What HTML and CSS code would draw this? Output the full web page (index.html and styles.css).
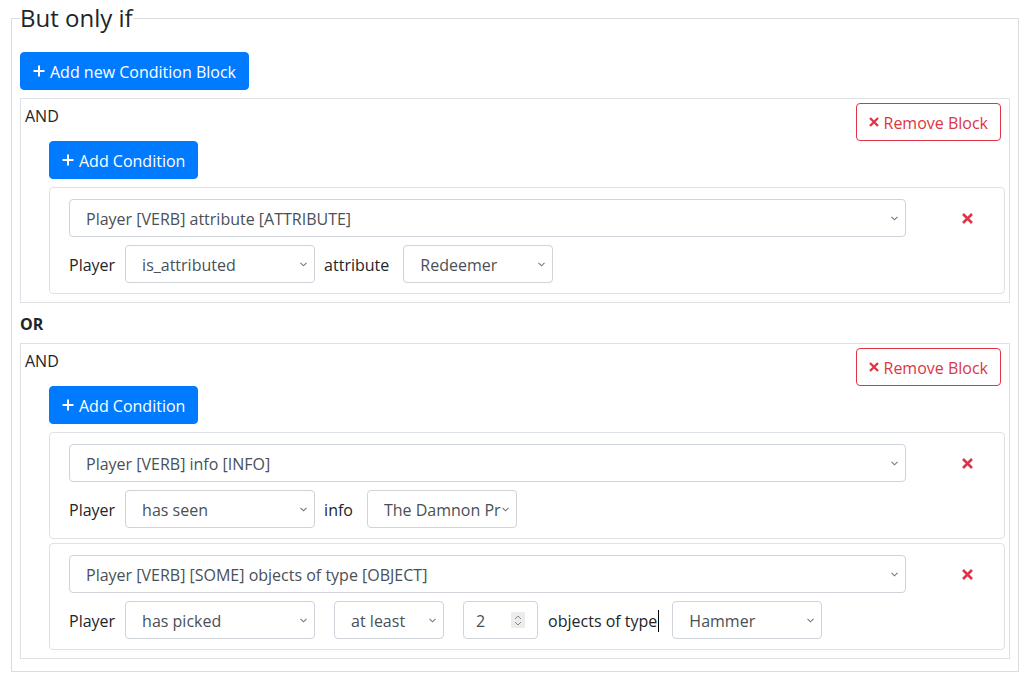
FILE: index.html
```html
<!DOCTYPE html>
<html lang="en">

<head>
    <meta charset="UTF-8">
    <meta name="viewport" content="width=device-width, initial-scale=1.0">
    <title>Conditions</title>
    <link rel="stylesheet" href="styles.css">
</head>

<body>
    <fieldset class="conditions">
        <legend>But only if</legend>

        <button class="btn btn-primary add-block">
            <svg class="icon" width="12" height="12" viewBox="0 0 12 12"><path d="M6 0.5v11M0.5 6h11" /></svg>
            Add new Condition Block
        </button>

        <div class="block">
            <div class="block-head">
                <span class="block-op">AND</span>
                <button class="btn btn-outline-danger">
                    <svg class="icon" width="10" height="10" viewBox="0 0 10 10"><path d="M1 1l8 8M9 1l-8 8" /></svg>
                    Remove Block
                </button>
            </div>
            <button class="btn btn-primary add-cond">
                <svg class="icon" width="12" height="12" viewBox="0 0 12 12"><path d="M6 0.5v11M0.5 6h11" /></svg>
                Add Condition
            </button>

            <div class="cond">
                <div class="cond-row">
                    <select class="form-control type-select">
                        <option>Player [VERB] attribute [ATTRIBUTE]</option>
                    </select>
                    <button class="cond-remove">
                        <svg width="11" height="11" viewBox="0 0 11 11"><path d="M1 1l9 9M10 1l-9 9" /></svg>
                    </button>
                </div>
                <div class="cond-row">
                    <span class="label">Player</span>
                    <select class="form-control w190">
                        <option>is_attributed</option>
                    </select>
                    <span class="label">attribute</span>
                    <select class="form-control w150">
                        <option>Redeemer</option>
                    </select>
                </div>
            </div>
        </div>

        <div class="or">OR</div>

        <div class="block">
            <div class="block-head">
                <span class="block-op">AND</span>
                <button class="btn btn-outline-danger">
                    <svg class="icon" width="10" height="10" viewBox="0 0 10 10"><path d="M1 1l8 8M9 1l-8 8" /></svg>
                    Remove Block
                </button>
            </div>
            <button class="btn btn-primary add-cond">
                <svg class="icon" width="12" height="12" viewBox="0 0 12 12"><path d="M6 0.5v11M0.5 6h11" /></svg>
                Add Condition
            </button>

            <div class="cond">
                <div class="cond-row">
                    <select class="form-control type-select">
                        <option>Player [VERB] info [INFO]</option>
                    </select>
                    <button class="cond-remove">
                        <svg width="11" height="11" viewBox="0 0 11 11"><path d="M1 1l9 9M10 1l-9 9" /></svg>
                    </button>
                </div>
                <div class="cond-row">
                    <span class="label">Player</span>
                    <select class="form-control w190">
                        <option>has seen</option>
                    </select>
                    <span class="label">info</span>
                    <select class="form-control w150">
                        <option>The Damnon Prophecy</option>
                    </select>
                </div>
            </div>

            <div class="cond">
                <div class="cond-row">
                    <select class="form-control type-select">
                        <option>Player [VERB] [SOME] objects of type [OBJECT]</option>
                    </select>
                    <button class="cond-remove">
                        <svg width="11" height="11" viewBox="0 0 11 11"><path d="M1 1l9 9M10 1l-9 9" /></svg>
                    </button>
                </div>
                <div class="cond-row">
                    <span class="label">Player</span>
                    <select class="form-control w190 wide-gap">
                        <option>has picked</option>
                    </select>
                    <select class="form-control w110 wide-gap">
                        <option>at least</option>
                    </select>
                    <div class="form-control number-field">
                        <span>2</span>
                        <span class="spinner">
                            <svg width="10" height="13" viewBox="0 0 10 13"><path d="M2 5l3-3 3 3M2 8l3 3 3-3" /></svg>
                        </span>
                    </div>
                    <span class="label">objects of type<span class="caret"></span></span>
                    <select class="form-control w150">
                        <option>Hammer</option>
                    </select>
                </div>
            </div>
        </div>
    </fieldset>
</body>

</html>
```

FILE: styles.css
```css
body {
    margin: 0;
    font-family: 'Open Sans', 'Noto Sans', sans-serif;
    font-size: 16px;
    line-height: 24px;
    color: #212529;
    background: #fff;
}

.conditions {
    margin: 0 12px 0 11px;
    padding: 16px 8px 12px;
    border: 1px solid #dcdcdc;
    min-width: 0;
}

.conditions legend {
    padding: 0;
    font-size: 24px;
    line-height: 36px;
}

.btn {
    display: flex;
    align-items: center;
    gap: 5px;
    width: max-content;
    padding: 7px 12px 5px;
    border: 1px solid transparent;
    border-radius: 4px;
    font-family: inherit;
    font-size: 16px;
    line-height: 24px;
    cursor: pointer;
}

.btn .icon {
    margin-top: -2px;
}

.btn .icon path {
    fill: none;
    stroke: currentColor;
    stroke-width: 2;
}

.btn-primary {
    background: #007bff;
    border-color: #007bff;
    color: #fff;
}

.btn-outline-danger {
    background: #fff;
    border-color: #dc3545;
    color: #dc3545;
}

.btn-outline-danger .icon path {
    stroke-width: 2.3;
}

.add-block {
    margin-bottom: 8px;
}

.block {
    border: 1px solid #dee2e6;
    padding: 4px;
}

.block-head {
    display: flex;
    justify-content: space-between;
    align-items: flex-start;
}

.block-op {
    padding-top: 1px;
}

.block-head .btn {
    margin-right: 4px;
}

.add-cond {
    margin: 0 0 8px 24px;
}

.or {
    margin: 9px 0 7px;
    font-weight: 700;
}

.cond {
    margin: 0 0 4px 24px;
    padding: 11px 20px 10px 19px;
    border: 1px solid #dee2e6;
    border-radius: 4px;
}

.cond-row {
    display: flex;
    align-items: center;
}

.cond-row + .cond-row {
    margin-top: 8px;
}

.form-control {
    box-sizing: border-box;
    height: 38px;
    padding: 6px 12px;
    border: 1px solid #ced4da;
    border-radius: 4px;
    background-color: #fff;
    color: #495057;
    font-family: inherit;
    font-size: 16px;
    line-height: 24px;
}

select.form-control {
    appearance: none;
    -webkit-appearance: none;
    padding: 7px 15px 5px 16px;
    background-image: url("data:image/svg+xml,%3Csvg xmlns='http://www.w3.org/2000/svg' width='7' height='5' viewBox='0 0 7 5'%3E%3Cpath d='M0.5 0.8l3 3 3-3' fill='none' stroke='%23777' stroke-width='1.1'/%3E%3C/svg%3E");
    background-repeat: no-repeat;
    background-position: right 7px center;
    background-size: 7px 5px;
}

.type-select {
    width: 837px;
}

.w190 {
    width: 190px;
}

.w150 {
    width: 150px;
}

.w110 {
    width: 110px;
}

.cond-row select {
    margin-right: 9px;
}

.cond-row select.wide-gap {
    margin-right: 19px;
}

.cond-row .type-select {
    margin-right: 0;
}

.label {
    margin-right: 10px;
    display: flex;
    align-items: center;
    padding-top: 1px;
}

.cond-row select + .label {
    margin-right: 14px;
}

.cond-remove {
    margin-left: 56px;
    padding: 0;
    border: 0;
    background: none;
    display: flex;
    cursor: pointer;
}

.cond-remove path {
    fill: none;
    stroke: #dc3545;
    stroke-width: 2.6;
}

.number-field {
    width: 75px;
    display: flex;
    align-items: center;
    justify-content: space-between;
    margin-right: 10px;
    padding-top: 7px;
    padding-bottom: 5px;
}

.spinner {
    width: 14px;
    height: 16px;
    margin-top: -2px;
    background: #ececec;
    display: flex;
    align-items: center;
    justify-content: center;
}

.spinner path {
    fill: none;
    stroke: #8a8a8a;
    stroke-width: 1;
}

.label .caret {
    display: inline-block;
    width: 0;
    height: 22px;
    border-left: 1px solid #000;
    margin-left: 1px;
}

.number-field + .label {
    margin-right: 13px;
}
```
